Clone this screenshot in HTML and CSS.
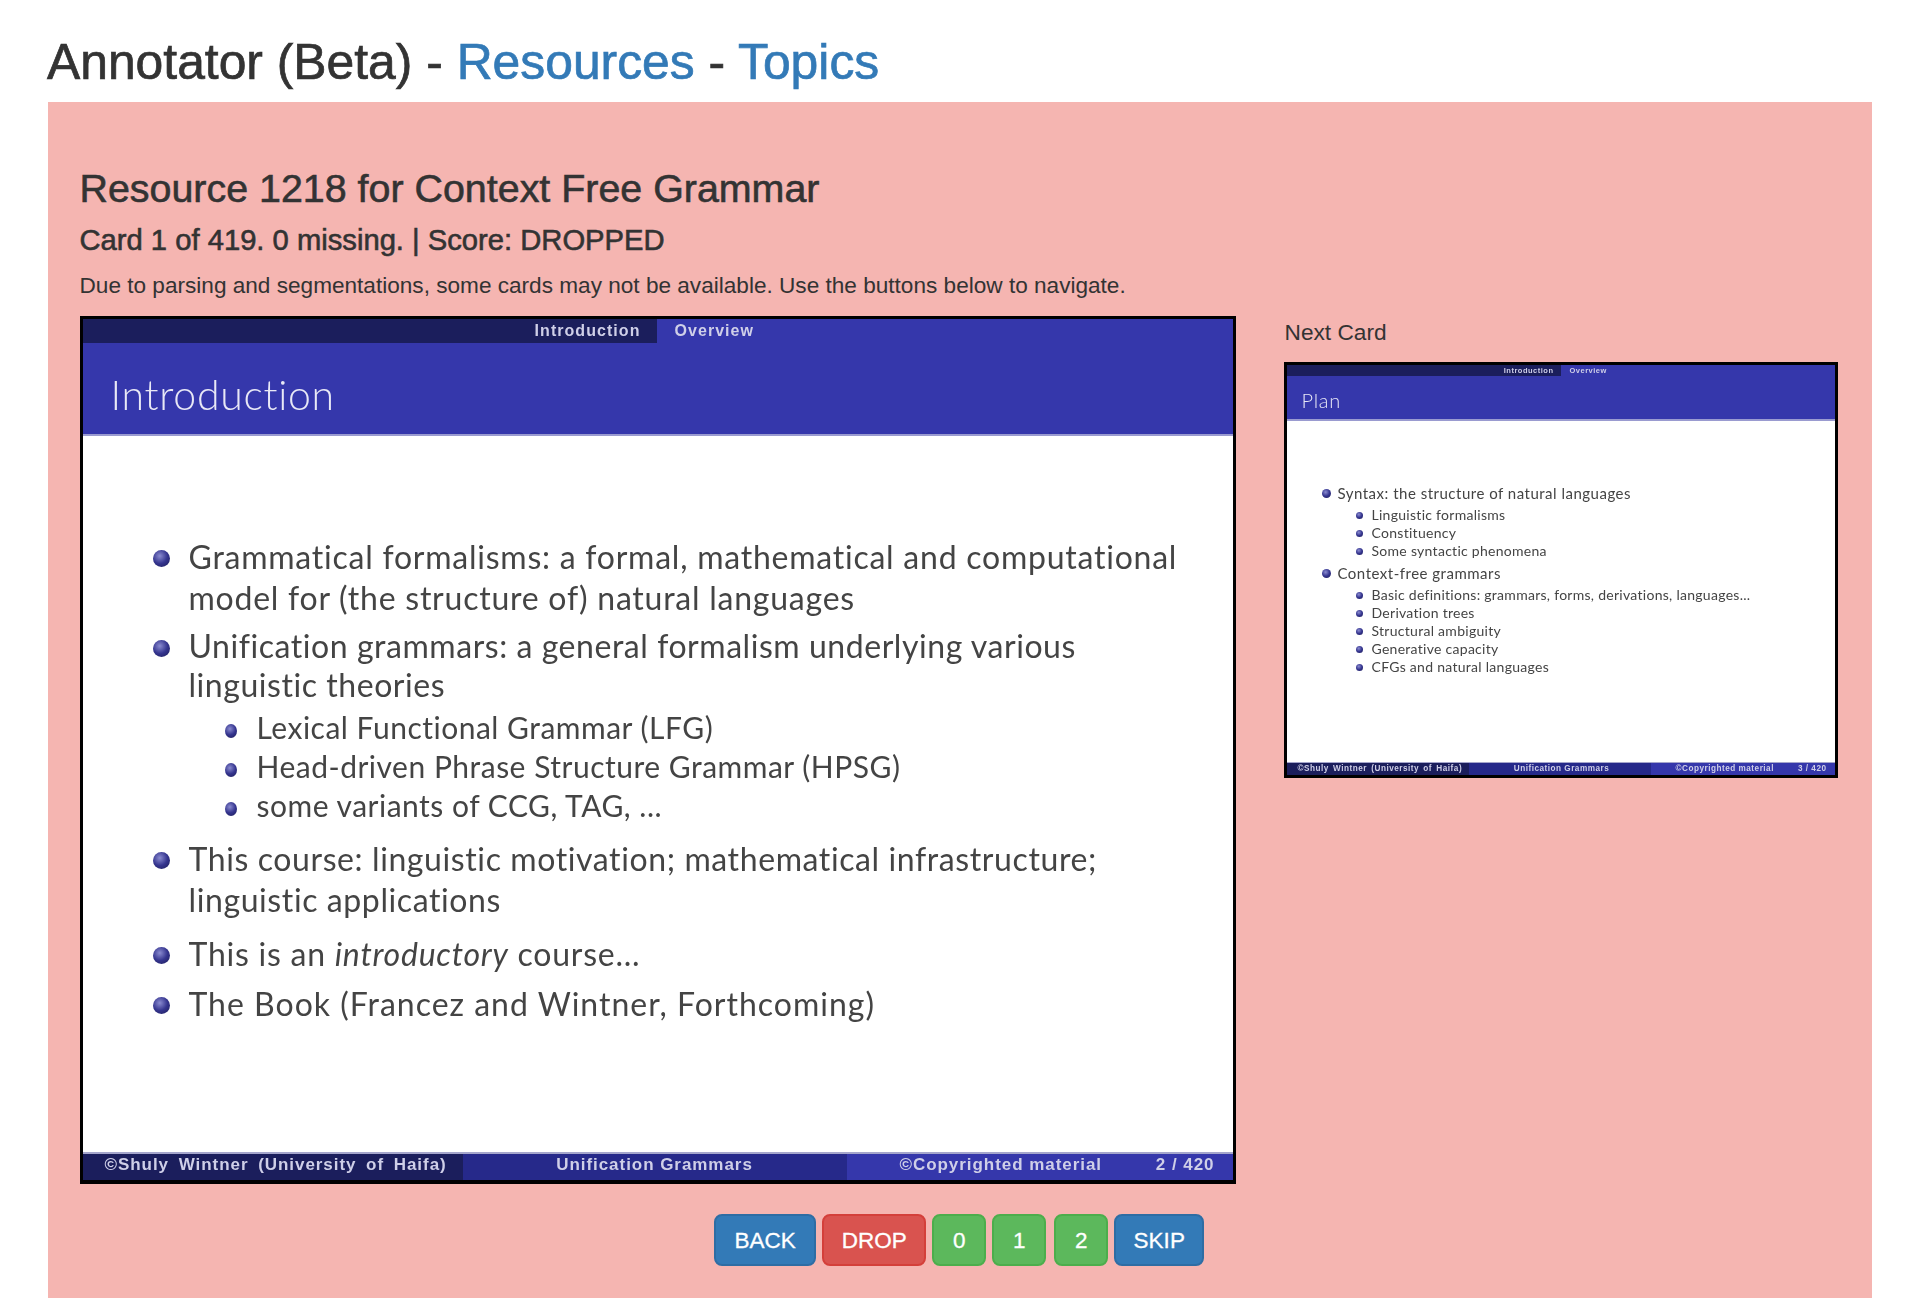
FILE: index.html
```html
<!DOCTYPE html>
<html lang="en">
<head>
<meta charset="utf-8">
<title>Annotator (Beta)</title>
<link rel="stylesheet" href="styles.css">
</head>
<body>
<h1 class="page-title">Annotator (Beta) - <a href="#">Resources</a> - <a href="#">Topics</a></h1>
<main class="panel">
  <h2 class="resource-title">Resource 1218 for Context Free Grammar</h2>
  <h3 class="card-status">Card 1 of 419. 0 missing. | Score: DROPPED</h3>
  <p class="hint">Due to parsing and segmentations, some cards may not be available. Use the buttons below to navigate.</p>
  <div class="cards">
    <section class="slide slide-main">
      <div class="slide-nav">
        <div class="nav-left"><span>Introduction</span></div>
        <div class="nav-right"><span>Overview</span></div>
      </div>
      <div class="slide-head">Introduction</div>
      <ul class="slide-body">
        <li>Grammatical formalisms: a formal, mathematical and computational<br>model for (the structure of) natural languages</li>
        <li class="gap-unif tight">Unification grammars: a general formalism underlying various<br>linguistic theories</li>
        <li class="sub gap-sub">Lexical Functional Grammar (LFG)</li>
        <li class="sub">Head-driven Phrase Structure Grammar (HPSG)</li>
        <li class="sub">some variants of CCG, TAG, ...</li>
        <li class="gap-course">This course: linguistic motivation; mathematical infrastructure;<br>linguistic applications</li>
        <li class="gap-intro">This is an <em>introductory</em> course...</li>
        <li class="gap-book">The Book (Francez and Wintner, Forthcoming)</li>
      </ul>
      <div class="slide-foot">
        <div class="foot-a"><span>©Shuly Wintner (University of Haifa)</span></div>
        <div class="foot-b"><span>Unification Grammars</span></div>
        <div class="foot-c"><span>©Copyrighted material</span><span>2 / 420</span></div>
      </div>
    </section>
    <aside class="next-card">
      <div class="next-label">Next Card</div>
      <section class="slide slide-small">
        <div class="slide-nav">
          <div class="nav-left"><span>Introduction</span></div>
          <div class="nav-right"><span>Overview</span></div>
        </div>
        <div class="slide-head">Plan</div>
        <ul class="slide-body">
          <li>Syntax: the structure of natural languages</li>
          <li class="sub first-sub">Linguistic formalisms</li>
          <li class="sub">Constituency</li>
          <li class="sub">Some syntactic phenomena</li>
          <li class="gap-top">Context-free grammars</li>
          <li class="sub first-sub">Basic definitions: grammars, forms, derivations, languages...</li>
          <li class="sub">Derivation trees</li>
          <li class="sub">Structural ambiguity</li>
          <li class="sub">Generative capacity</li>
          <li class="sub">CFGs and natural languages</li>
        </ul>
        <div class="slide-foot">
          <div class="foot-a"><span>©Shuly Wintner (University of Haifa)</span></div>
          <div class="foot-b"><span>Unification Grammars</span></div>
          <div class="foot-c"><span>©Copyrighted material</span><span>3 / 420</span></div>
        </div>
      </section>
    </aside>
  </div>
  <div class="actions">
    <button class="btn btn-blue btn-back">BACK</button>
    <button class="btn btn-red btn-drop">DROP</button>
    <button class="btn btn-green btn-num">0</button>
    <button class="btn btn-green btn-num">1</button>
    <button class="btn btn-green btn-num btn-two">2</button>
    <button class="btn btn-blue btn-skip">SKIP</button>
  </div>
</main>
</body>
</html>
```
FILE: styles.css
```css
* { box-sizing: border-box; }
html, body { margin: 0; padding: 0; background: #fff; }
body {
  font-family: "Liberation Sans", Arial, sans-serif;
  color: #333;
  height: 1316px;
  overflow: hidden;
}
a { color: #337ab7; text-decoration: none; }

.page-title {
  margin: 0;
  padding: 34px 0 0 47px;
  height: 102px;
  font-size: 49.8px;
  line-height: 56px;
  font-weight: 400;
  -webkit-text-stroke: 0.7px currentColor;
}

.panel {
  margin: 0 58px 0 48px;
  height: 1196px;
  padding: 64px 32px 32px 31.5px;
  background: #f5b5b1;
}
.resource-title {
  margin: 0;
  font-size: 39.4px;
  line-height: 44px;
  font-weight: 400;
  -webkit-text-stroke: 0.6px currentColor;
}
.card-status {
  margin: 13px 0 0;
  font-size: 29.2px;
  line-height: 34px;
  font-weight: 400;
  -webkit-text-stroke: 0.6px currentColor;
}
.hint {
  margin: 14px 0 0;
  font-size: 22.6px;
  line-height: 30px;
}

.cards {
  display: grid;
  grid-template-columns: 1156px 554px;
  gap: 48px;
  margin-top: 15px;
}
.next-label {
  font-size: 22.7px;
  line-height: 32px;
  margin-bottom: 14px;
  margin-left: 1px;
}

.slide {
  display: flex;
  flex-direction: column;
  background: #fff;
  border: 3px solid #000;
  font-family: Lato, "Open Sans", sans-serif;
  color: #444;
}
.slide-nav, .slide-foot { display: flex; font-family: "Liberation Sans", Arial, sans-serif; font-weight: 700; color: #cfcfe8; }
.slide-nav span, .slide-foot span { filter: blur(0.7px); }
.slide-head, .slide-body li { filter: blur(0.5px); }
.nav-left { background: #1b1e5c; display: flex; justify-content: flex-end; align-items: center; }
.nav-right { flex: 1; background: #3537ab; display: flex; align-items: center; }
.slide-head { background: #3537ab; color: #e8e8f6; border-bottom: 2px solid #9a9bd0; font-weight: 300; }
.slide-body { flex: 1; list-style: none; margin: 0; }
.slide-body li { position: relative; }
.slide-body li::before {
  content: "";
  position: absolute;
  border-radius: 50%;
  background: radial-gradient(circle at 40% 35%, #8a8bd0 0%, #35358f 50%, #1b1b55 100%);
}
.foot-a { background: #1b1e5c; display: flex; align-items: center; }
.foot-b { background: #26298a; display: flex; align-items: center; justify-content: center; }
.foot-c { flex: 1; background: #3537ab; display: flex; align-items: center; justify-content: space-between; }

/* main slide */
.slide-main { height: 868px; border-bottom-width: 4px; }
.slide-main .slide-nav { height: 24px; font-size: 16px; letter-spacing: 1.05px; }
.slide-main .nav-left { width: 574px; padding-right: 16px; }
.slide-main .nav-right { padding-left: 18px; }
.slide-main .slide-head { height: 93px; padding: 26px 0 0 28px; font-size: 41px; line-height: 52px; letter-spacing: 0.7px; }
.slide-main .slide-body { padding: 100px 0 0 106px; font-size: 32px; line-height: 41px; letter-spacing: 0.76px; }
.slide-main li::before { left: -36px; top: 14px; width: 17px; height: 17px; }
.slide-main li.sub { margin-left: 68px; line-height: 39px; font-size: 30px; letter-spacing: 0.5px; }
.slide-main li.sub::before { left: -32px; top: 16px; width: 12px; height: 14px; }
.slide-main li.tight { line-height: 39px; letter-spacing: 0.55px; }
.slide-main .gap-unif { margin-top: 8px; }
.slide-main .gap-sub { margin-top: 4px; }
.slide-main .gap-course { margin-top: 13px; letter-spacing: 0.6px; }
.slide-main .gap-intro { margin-top: 13px; }
.slide-main .gap-book { margin-top: 9px; letter-spacing: 1px; }
.slide-main .slide-foot { height: 28px; font-size: 17px; letter-spacing: 0.95px; border-top: 2px solid #a5a6cc; }
.slide-main .slide-foot span { position: relative; top: -2px; }
.slide-main .foot-a { width: 380px; padding-left: 22px; word-spacing: 4px; }
.slide-main .foot-b { width: 384px; }
.slide-main .foot-c { padding: 0 18px 0 53px; }

/* small slide */
.slide-small { height: 416px; }
.slide-small .slide-nav { height: 11px; font-size: 7.5px; letter-spacing: 0.5px; }
.slide-small .nav-left { width: 274px; padding-right: 7px; }
.slide-small .nav-right { padding-left: 9px; }
.slide-small .slide-head { height: 45px; padding: 11px 0 0 15px; font-size: 20px; line-height: 26px; letter-spacing: 0.7px; }
.slide-small .slide-body { padding: 63px 0 0 51px; font-size: 15px; line-height: 18px; letter-spacing: 0.5px; }
.slide-small li::before { left: -16px; top: 5px; width: 9px; height: 9px; }
.slide-small li.sub { margin-left: 34px; font-size: 14px; letter-spacing: 0.28px; }
.slide-small li.sub::before { left: -16px; top: 6px; width: 7px; height: 7px; }
.slide-small li.first-sub { margin-top: 4px; }
.slide-small .gap-top { margin-top: 4px; }
.slide-small .slide-foot { height: 13px; font-size: 8.2px; letter-spacing: 0.5px; border-top: 1px solid #a5a6cc; }
.slide-small .slide-foot span { position: relative; top: -1px; }
.slide-small .foot-a { width: 182px; padding-left: 11px; word-spacing: 1.5px; }
.slide-small .foot-b { width: 182px; padding-left: 4px; }
.slide-small .foot-c { padding: 0 8px 0 25px; }

.actions { display: flex; justify-content: center; gap: 6px; margin-top: 30px; margin-left: -1px; }
.btn {
  height: 52px;
  padding: 2px 0 0;
  font-family: "Liberation Sans", Arial, sans-serif;
  font-size: 22.5px;
  color: #fff;
  border-radius: 8px;
  border: 2px solid;
  -webkit-text-stroke: 0.3px #fff;
}
.btn-blue { background: #337ab7; border-color: #2e6da4; }
.btn-red { background: #d9534f; border-color: #d43f3a; }
.btn-green { background: #5cb85c; border-color: #4cae4c; }
.btn-back { width: 102px; }
.btn-drop { width: 104px; }
.btn-num { width: 54px; }
.btn-two { margin-left: 2px; }
.btn-skip { width: 90px; }
```
